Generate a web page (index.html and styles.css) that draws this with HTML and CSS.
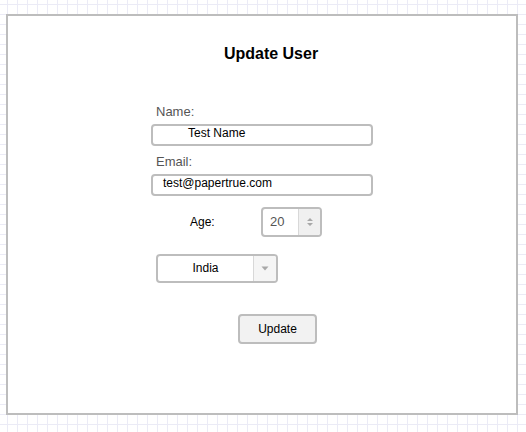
FILE: index.html
```html
<!DOCTYPE html>
<html>
<head>
<meta charset="utf-8">
<link rel="stylesheet" href="styles.css">
</head>
<body>
<div class="panel">
  <h1 class="title">Update User</h1>
  <form class="form">
    <label class="label">Name:</label>
    <div class="field field-name">Test Name</div>
    <label class="label label-email">Email:</label>
    <div class="field field-email">test@papertrue.com</div>
    <div class="age-row">
      <span class="age-label">Age:</span>
      <div class="number">
        <span class="number-value">20</span>
        <span class="spinner">
          <svg width="8" height="10" viewBox="0 0 8 10"><path d="M4 1 L7 4 L1 4 Z M1 6 L7 6 L4 9 Z" fill="#a8a8a8"/></svg>
        </span>
      </div>
    </div>
    <div class="select">
      <span class="select-value">India</span>
      <span class="select-btn">
        <svg width="8" height="5" viewBox="0 0 8 5"><path d="M0.5 0.5 L7.5 0.5 L4 4.5 Z" fill="#a8a8a8"/></svg>
      </span>
    </div>
    <div class="button">Update</div>
  </form>
</div>
</body>
</html>
```
FILE: styles.css
```css
html, body {
  margin: 0;
  padding: 0;
}
body {
  width: 526px;
  height: 432px;
  overflow: hidden;
  font-family: "Liberation Sans", Arial, sans-serif;
  background-color: #ffffff;
  background-image:
    linear-gradient(to right, #ebebf6 1px, transparent 1px),
    linear-gradient(to bottom, #ebebf6 1px, transparent 1px);
  background-size: 10px 10px;
  background-position: 7px 4px;
}
.panel {
  box-sizing: border-box;
  margin: 14px 0 0 6px;
  width: 512px;
  height: 401px;
  border: 2px solid #bdbdbd;
  background: #ffffff;
  padding: 29px 0 0 0;
}
.title {
  margin: 0;
  font-size: 16px;
  line-height: 18px;
  font-weight: bold;
  text-align: center;
  padding-left: 18px;
  color: #000;
}
.form {
  display: flex;
  flex-direction: column;
  align-items: flex-start;
  margin: 41px 0 0 143px;
}
.label {
  display: block;
  margin-left: 5px;
  font-size: 13px;
  line-height: 16px;
  color: #555555;
}
.label-email {
  margin-top: 8px;
}
.field {
  box-sizing: border-box;
  width: 222px;
  height: 22px;
  margin-top: 4px;
  border: 2px solid #bdbdbd;
  border-radius: 4px;
  font-size: 12px;
  line-height: 14px;
  color: #000;
  padding-top: 0;
}
.field-name {
  padding-left: 35px;
}
.field-email {
  padding-left: 10px;
}
.age-row {
  display: flex;
  align-items: center;
  margin-top: 11px;
  height: 30px;
}
.age-label {
  margin-left: 39px;
  width: 71px;
  font-size: 12px;
  color: #000;
}
.number {
  box-sizing: border-box;
  width: 61px;
  height: 30px;
  border: 2px solid #bdbdbd;
  border-radius: 4px;
  display: flex;
  overflow: hidden;
}
.number-value {
  flex: 1;
  padding-left: 7px;
  font-size: 13px;
  line-height: 26px;
  color: #555555;
}
.spinner {
  width: 21px;
  background: #f0f0f0;
  border-left: 1px solid #d8d8d8;
  display: flex;
  align-items: center;
  justify-content: center;
}
.select {
  box-sizing: border-box;
  margin: 17px 0 0 5px;
  width: 122px;
  height: 29px;
  border: 2px solid #bdbdbd;
  border-radius: 4px;
  display: flex;
  overflow: hidden;
}
.select-value {
  flex: 1;
  text-align: center;
  font-size: 12px;
  line-height: 25px;
  color: #000;
}
.select-btn {
  width: 22px;
  background: #f5f5f5;
  border-left: 1px solid #d8d8d8;
  display: flex;
  align-items: center;
  justify-content: center;
}
.button {
  box-sizing: border-box;
  margin: 31px 0 0 87px;
  width: 79px;
  height: 30px;
  border: 2px solid #bdbdbd;
  border-radius: 4px;
  background: #f2f2f2;
  font-size: 12px;
  line-height: 26px;
  text-align: center;
  color: #000;
}
```
